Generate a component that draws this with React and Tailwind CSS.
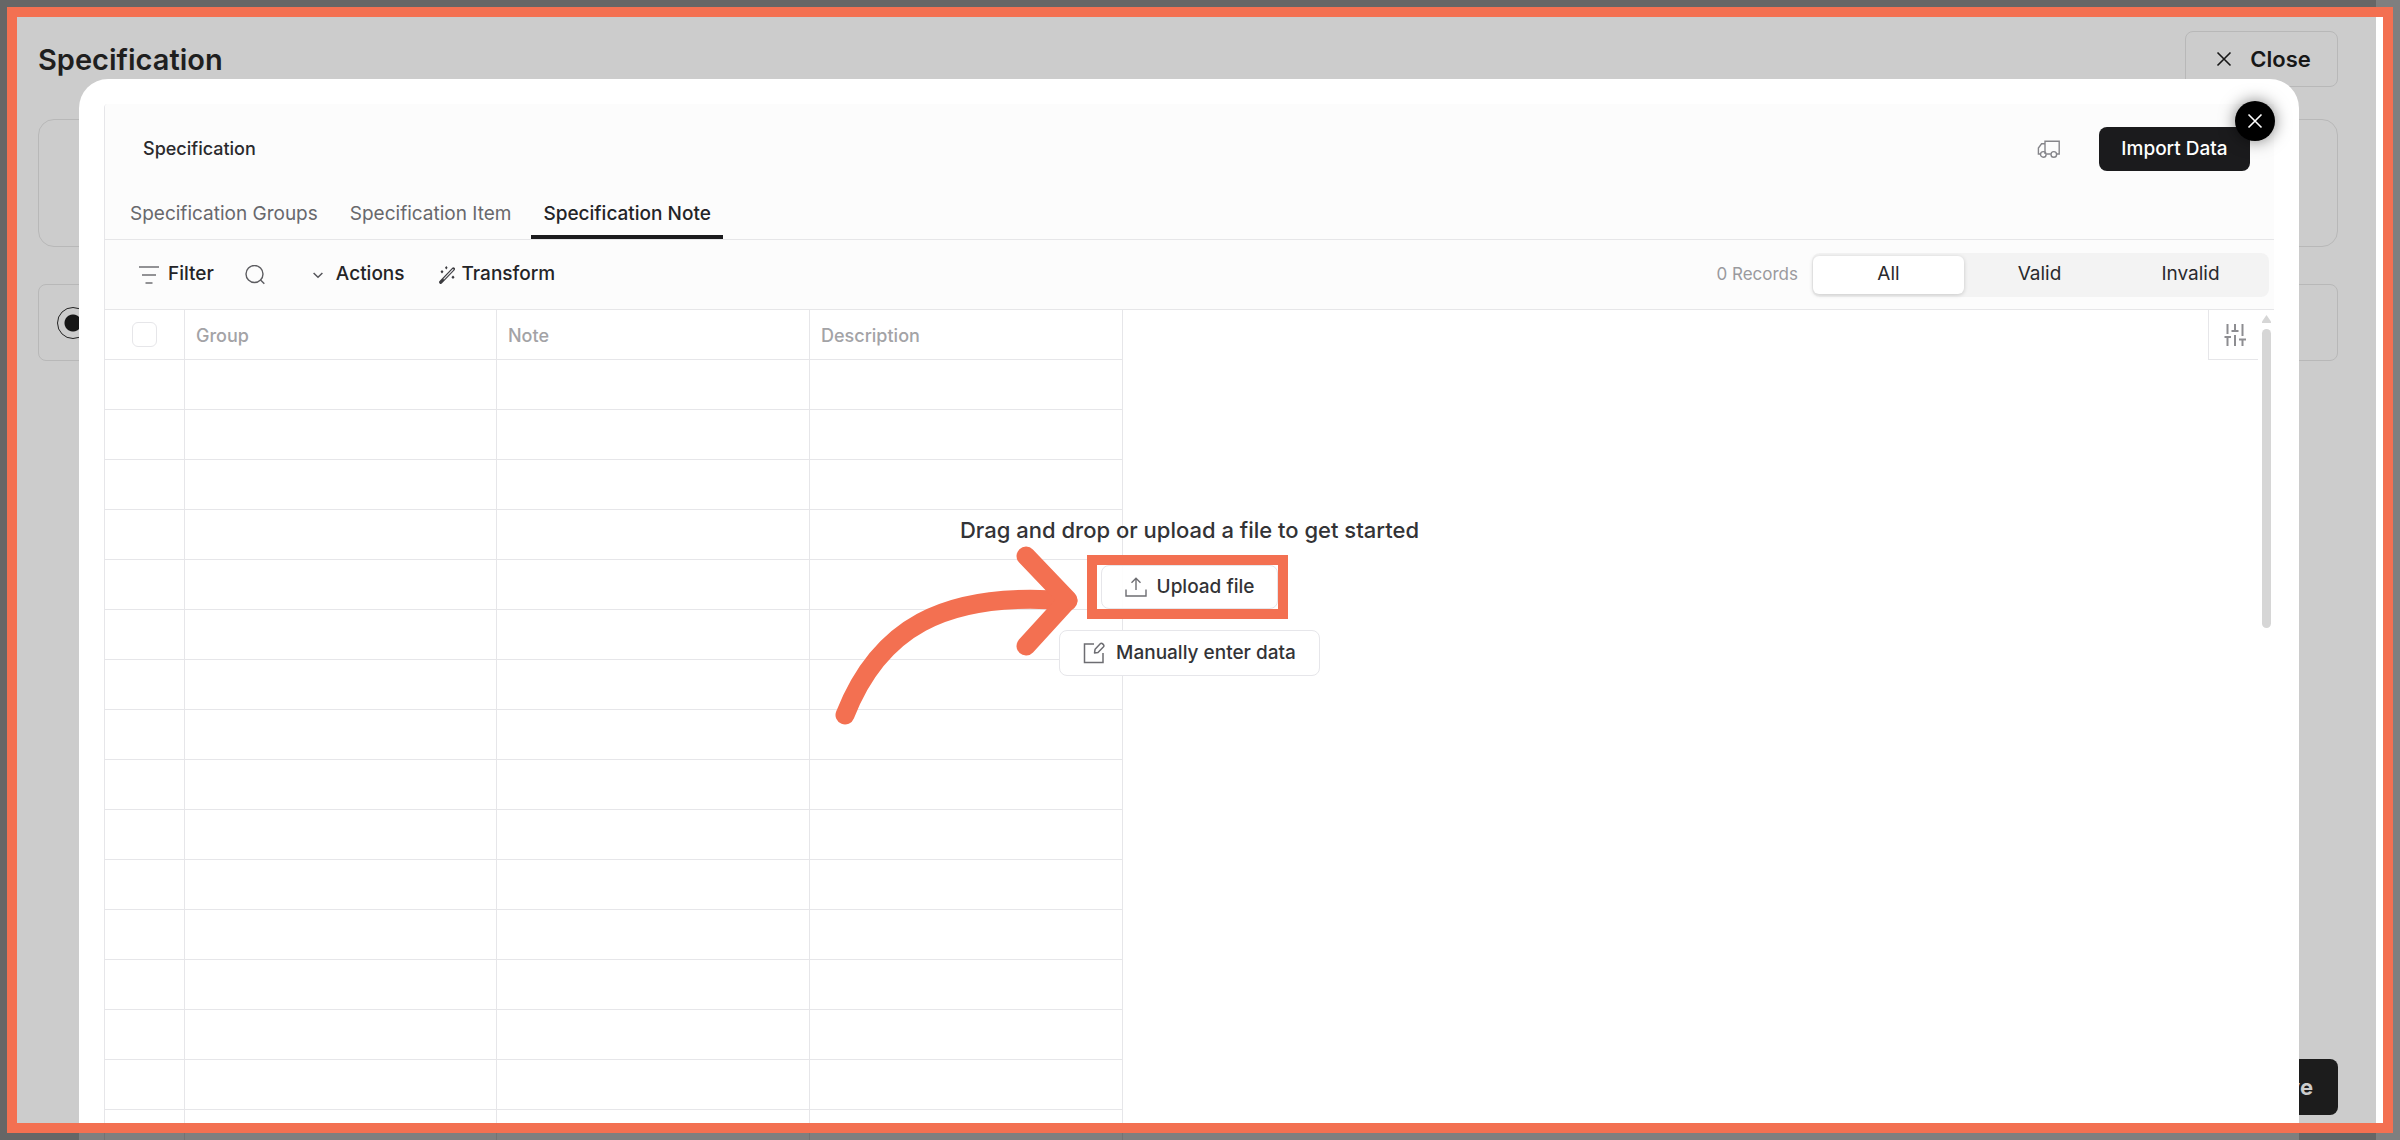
import React from "react";

const tabs = ["Specification Groups", "Specification Item", "Specification Note"];
const columns = ["Group", "Note", "Description"];
const rows = Array.from({ length: 16 }, (_, i) => i);

function CrossIcon({ className }) {
  return (
    <svg className={className} viewBox="0 0 16 16" fill="none" stroke="currentColor" strokeWidth="1.6" aria-hidden="true">
      <path d="M1.500 1.500l13 13M14.500 1.500l-13 13" />
    </svg>
  );
}

function TruckIcon() {
  return (
    <svg className="h-[18px] w-6" viewBox="0 0 24 18" fill="none" stroke="#85858a" strokeWidth="1.4" aria-hidden="true">
      <path d="M8 14V1.2h14.2V14h-2.6M13.8 14H9.4M8 3.8H4.6L1.4 8v6h1.8" />
      <circle cx="6.3" cy="14.4" r="2.8" />
      <circle cx="16.8" cy="14.4" r="2.8" />
    </svg>
  );
}

function FilterIcon() {
  return (
    <svg className="h-5 w-5" viewBox="0 0 20 20" fill="none" stroke="#6f6f73" strokeWidth="1.5" aria-hidden="true">
      <path d="M0 2h20M3 10h14M6.5 18h7" />
    </svg>
  );
}

function SearchIcon() {
  return (
    <svg className="h-5 w-5" viewBox="0 0 20 20" fill="none" stroke="#5c5c60" strokeWidth="1.4" aria-hidden="true">
      <circle cx="9.5" cy="9" r="8.5" />
      <path d="M15.6 15L19.3 18.8" />
    </svg>
  );
}

function WandIcon() {
  return (
    <svg className="h-[18px] w-4" viewBox="0 0 16 18" fill="none" aria-hidden="true">
      <path d="M1.8 16.2L14.3 3.1" stroke="#3c3c40" strokeWidth="3.4" strokeLinecap="round" />
      <path d="M5 12.9L14 3.500" stroke="#e4e4e6" strokeWidth="1.1" strokeLinecap="round" />
      <g fill="#3c3c40">
        <path d="M7.300 0l1.300 1.700-1.300 1.700L6 1.700zM3 4l1.500 1.800L3 7.600 1.500 5.800zM14 9.400l1.600 1.800-1.600 1.800-1.600-1.800z" />
      </g>
    </svg>
  );
}

function SlidersIcon() {
  return (
    <svg className="h-[22px] w-[22px]" viewBox="0 0 22 22" fill="none" stroke="#8d8d91" strokeWidth="2" aria-hidden="true">
      <path d="M3.500 0v10M3.500 13v9M.5 13h6.500M11 0v7M7.500 7h7M11 11v11M18.500 0v12M18.500 15.500V22M15 15.500h7" />
    </svg>
  );
}

function UploadIcon() {
  return (
    <svg className="h-5 w-[22px]" viewBox="0 0 22 20" fill="none" stroke="#6d6d72" strokeWidth="1.4" aria-hidden="true">
      <path d="M1 12.5V19h20v-6.5M11 13V1.5M6.5 5.8L11 1.3l4.5 4.5" />
    </svg>
  );
}

function EditIcon() {
  return (
    <svg className="h-[22px] w-[22px]" viewBox="0 0 22 22" fill="none" stroke="#6d6d72" strokeWidth="1.5" aria-hidden="true">
      <path d="M11 2H1.5v18.5H20V11" />
      <path d="M11.5 11l.6-3.8 5.4-5.7c.8-.8 2.3.4 3 1.2.7.8.4 1.600-.2 2.300L15 10.500z" strokeLinejoin="round" />
    </svg>
  );
}

function CurvedArrow() {
  return (
    <svg
      className="pointer-events-none absolute right-full top-[-26px] mr-[22px] h-[188px] w-[244px]"
      viewBox="0 0 244 188"
      fill="none"
      stroke="#f37051"
      strokeWidth="19"
      strokeLinecap="round"
      strokeLinejoin="round"
      aria-hidden="true"
    >
      <path d="M10 176C43 92 106 51 233 62" />
      <path d="M191 17L233 61 191 107" />
    </svg>
  );
}

function Backdrop() {
  return (
    <main className="flex h-full flex-col bg-[#ccc] px-[38px] pt-[31px]">
      <header className="flex h-14 items-center justify-between">
        <h1 className="pt-0.5 text-[29px] leading-9 font-semibold text-[#1f1f1f]">Specification</h1>
        <button className="flex h-14 w-[153px] items-center justify-center gap-[18px] rounded-lg border border-[#b8b8b8] pl-1 text-[22px] font-semibold text-[#171717]">
          <CrossIcon className="h-4 w-4" />
          Close
        </button>
      </header>
      <section className="mt-8 h-32 shrink-0 rounded-2xl border border-[#b8b8b8]" />
      <label className="mt-[37px] flex h-[77px] shrink-0 items-center rounded-lg border border-[#b8b8b8] pl-[18px]">
        <input
          type="radio"
          name="source"
          defaultChecked
          aria-label="Import source"
          className="h-8 w-8 appearance-none rounded-full border border-[#222] bg-[radial-gradient(circle,#171717_8px,transparent_9px)]"
        />
      </label>
      <div className="mt-auto mb-[25px] flex justify-end">
        <button className="h-14 rounded-lg bg-[#1c1c1c] px-[25px] text-[22px] font-bold text-[#ccc]">Save</button>
      </div>
    </main>
  );
}

function ModalHeader() {
  return (
    <div className="flex h-[136px] shrink-0 flex-col border-b border-[#e6e6e8] bg-[#fcfcfc]">
      <div className="flex items-center justify-between pt-[23px] pr-6 pl-[38px]">
        <h2 className="text-[18px] leading-6 font-medium text-[#2a2a2d]">Specification</h2>
        <div className="flex items-center gap-[38px]">
          <button aria-label="Transfers"><TruckIcon /></button>
          <button className="h-11 w-[151px] rounded-lg bg-[#1b1b1d] text-[19px] font-medium text-white">Import Data</button>
        </div>
      </div>
      <nav className="mt-auto flex gap-2 pl-[13px]">
        {tabs.map((tab, i) => (
          <button
            key={tab}
            className={
              i === 2
                ? "h-[52px] border-b-4 border-[#1b1b1d] px-3 pt-1.5 text-[19px] leading-7 font-medium text-[#242427]"
                : "h-[52px] border-b-4 border-transparent px-3 pt-1.5 text-[19px] leading-7 text-[#68686c]"
            }
          >
            {tab}
          </button>
        ))}
      </nav>
    </div>
  );
}

function Toolbar() {
  return (
    <div className="flex h-[70px] shrink-0 items-center justify-between border-b border-[#e6e6e8] bg-[#fcfcfc] pr-[5px] pl-[34px]">
      <div className="flex items-center text-[19px] font-medium text-[#242427]">
        <button className="flex items-center gap-[9px]">
          <FilterIcon />
          Filter
        </button>
        <button className="ml-[31px]" aria-label="Search"><SearchIcon /></button>
        <button className="ml-12 flex items-center gap-[13px]">
          <svg className="h-[10px] w-[10px]" viewBox="0 0 10 10" fill="none" stroke="#55555a" strokeWidth="1.5" aria-hidden="true">
            <path d="M.6 3L5 7.3 9.4 3" />
          </svg>
          Actions
        </button>
        <button className="ml-[34px] flex items-center gap-[7px]">
          <WandIcon />
          Transform
        </button>
      </div>
      <div className="flex items-center gap-[14px]">
        <span className="text-[17px] text-[#9a9a9e]">0 Records</span>
        <div className="flex h-11 items-center rounded-lg bg-[#f3f3f3] pr-[3px] pl-px text-[19px] text-[#2a2a2d]">
          <button className="h-[38px] w-[151px] rounded-md bg-white shadow-[0_1px_4px_rgba(0,0,0,0.18)]">All</button>
          <button className="h-[38px] w-[151px]">Valid</button>
          <button className="h-[38px] w-[151px]">Invalid</button>
        </div>
      </div>
    </div>
  );
}

function DataGrid() {
  return (
    <table className="w-[1018px] table-fixed border-separate border-spacing-0">
      <colgroup>
        <col className="w-20" />
        <col className="w-[312px]" />
        <col className="w-[313px]" />
        <col className="w-[313px]" />
      </colgroup>
      <thead>
        <tr className="h-[50px]">
          <th className="border-r border-b border-[#e6e6e9] p-0">
            <input
              type="checkbox"
              aria-label="Select all rows"
              className="mx-auto block h-[25px] w-[25px] appearance-none rounded-md border border-[#e6e6e9] bg-white"
            />
          </th>
          {columns.map((name) => (
            <th
              key={name}
              scope="col"
              className="border-r border-b border-[#e6e6e9] pt-0.5 pr-0 pb-0 pl-[11px] text-left text-[18px] leading-6 font-medium text-[#a3a3a6]"
            >
              {name}
            </th>
          ))}
        </tr>
      </thead>
      <tbody>
        {rows.map((r) => (
          <tr key={r} className="h-[50px]">
            <td className="border-r border-b border-[#e6e6e9]" />
            <td className="border-r border-b border-[#e6e6e9]" />
            <td className="border-r border-b border-[#e6e6e9]" />
            <td className="border-r border-b border-[#e6e6e9]" />
          </tr>
        ))}
      </tbody>
    </table>
  );
}

function EmptyState() {
  return (
    <div className="absolute inset-x-0 top-0 flex flex-col items-center pt-[206px] text-[#333336]">
      <p className="text-[22px] leading-7 font-medium">Drag and drop or upload a file to get started</p>
      <div className="relative mt-[21px]">
        <button className="flex h-[44px] items-center gap-[10px] rounded-lg border border-[#e6e6ea] bg-white/90 px-[23px] text-[19px] font-medium">
          <UploadIcon />
          Upload file
        </button>
        <div className="pointer-events-none absolute -top-[10px] -right-[10px] -bottom-[10px] -left-[14px] border-[10px] border-[#f37051]" />
        <CurvedArrow />
      </div>
      <button className="mt-[21px] flex h-[46px] items-center gap-[11px] rounded-lg border border-[#e6e6ea] bg-white px-[23px] text-[19px] font-medium">
        <EditIcon />
        Manually enter data
      </button>
    </div>
  );
}

function ImportModal() {
  return (
    <div role="dialog" aria-label="Specification import" className="absolute top-[79px] right-[101px] bottom-0 left-[79px] flex flex-col rounded-t-[29px] bg-white px-[25px] pt-[25px]">
      <div className="flex min-h-0 flex-1 flex-col overflow-hidden rounded-tl border-l border-[#e6e6e9]">
        <ModalHeader />
        <Toolbar />
        <div className="relative flex min-h-0 flex-1 items-start justify-between overflow-hidden">
          <DataGrid />
          <div className="flex items-start">
            <button aria-label="Column settings" className="flex h-[50px] w-[50px] items-center justify-center border-b border-l border-[#e6e6e9] pl-0.5">
              <SlidersIcon />
            </button>
            <div className="mr-[3px] ml-1 flex w-[9px] flex-col items-center pt-[5px]">
              <svg className="h-2 w-[9px]" viewBox="0 0 9 8" fill="#d6d6d6" aria-hidden="true">
                <path d="M4.5 0L9 6.500v1.500H0V6.500z" />
              </svg>
              <div className="mt-[6px] h-[299px] w-[9px] rounded-full bg-[#d6d6d6]" />
            </div>
          </div>
          <EmptyState />
        </div>
      </div>
      <button
        aria-label="Close dialog"
        className="absolute top-[22px] right-6 flex h-10 w-10 items-center justify-center rounded-full bg-black text-white shadow-[0_0_16px_rgba(0,0,0,0.5)]"
      >
        <CrossIcon className="h-4 w-4" />
      </button>
    </div>
  );
}

export default function App() {
  return (
    <div className="relative h-screen overflow-hidden bg-[#222] font-['Inter',sans-serif]">
      <div className="h-full bg-white pr-6">
        <Backdrop />
      </div>
      <ImportModal />
      <div className="pointer-events-none absolute inset-[7px] border-[10px] border-[#f37051] shadow-[0_0_0_8px_rgba(0,0,0,0.5)]" />
    </div>
  );
}
